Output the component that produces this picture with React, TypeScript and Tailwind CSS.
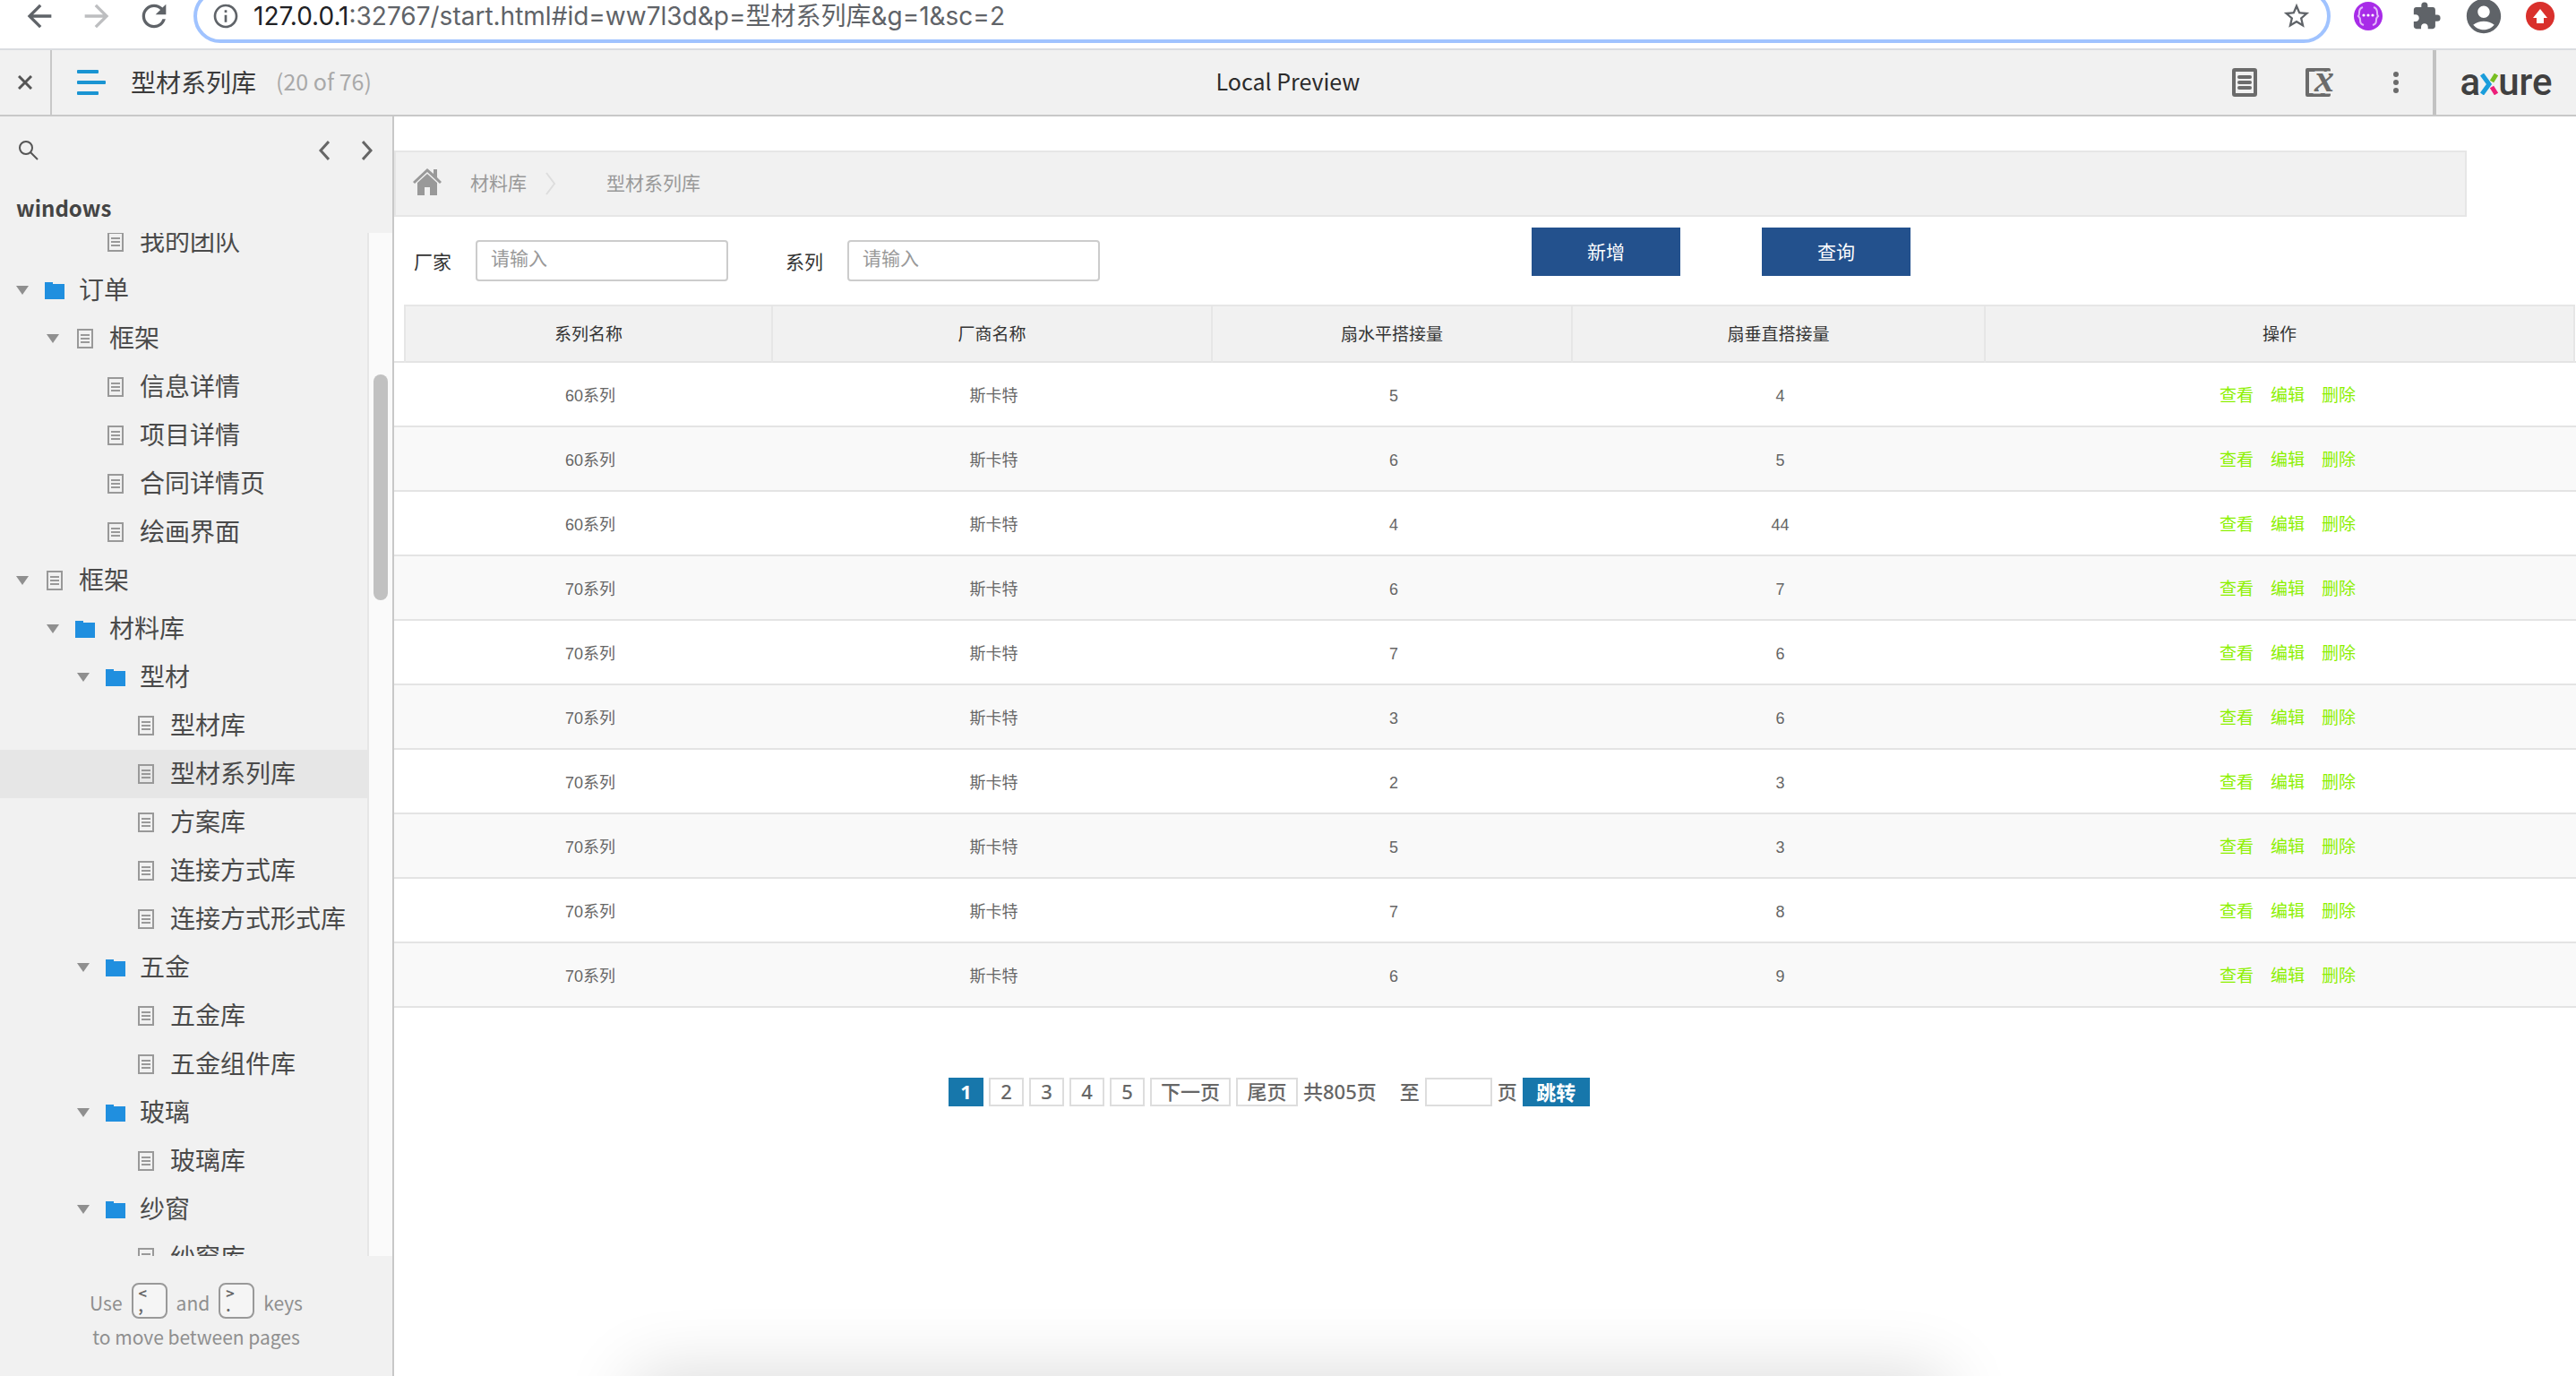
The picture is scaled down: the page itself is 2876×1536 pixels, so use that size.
import { useState } from "react";
import {
  MdAccountCircle,
  MdArrowBack,
  MdArrowForward,
  MdExtension,
  MdInfoOutline,
  MdRefresh,
  MdStarBorder,
} from "react-icons/md";

type Node = { level: number; kind: "folder" | "page"; label: string; open?: boolean };

const tree: Node[] = [
  { level: 2, kind: "page", label: "我的团队" },
  { level: 0, kind: "folder", label: "订单", open: true },
  { level: 1, kind: "page", label: "框架", open: true },
  { level: 2, kind: "page", label: "信息详情" },
  { level: 2, kind: "page", label: "项目详情" },
  { level: 2, kind: "page", label: "合同详情页" },
  { level: 2, kind: "page", label: "绘画界面" },
  { level: 0, kind: "page", label: "框架", open: true },
  { level: 1, kind: "folder", label: "材料库", open: true },
  { level: 2, kind: "folder", label: "型材", open: true },
  { level: 3, kind: "page", label: "型材库" },
  { level: 3, kind: "page", label: "型材系列库" },
  { level: 3, kind: "page", label: "方案库" },
  { level: 3, kind: "page", label: "连接方式库" },
  { level: 3, kind: "page", label: "连接方式形式库" },
  { level: 2, kind: "folder", label: "五金", open: true },
  { level: 3, kind: "page", label: "五金库" },
  { level: 3, kind: "page", label: "五金组件库" },
  { level: 2, kind: "folder", label: "玻璃", open: true },
  { level: 3, kind: "page", label: "玻璃库" },
  { level: 2, kind: "folder", label: "纱窗", open: true },
  { level: 3, kind: "page", label: "纱窗库" },
];

const indents = ["pl-[18px]", "pl-[52px]", "pl-[86px]", "pl-[120px]"];

const rows = [
  ["60系列", "斯卡特", "5", "4"],
  ["60系列", "斯卡特", "6", "5"],
  ["60系列", "斯卡特", "4", "44"],
  ["70系列", "斯卡特", "6", "7"],
  ["70系列", "斯卡特", "7", "6"],
  ["70系列", "斯卡特", "3", "6"],
  ["70系列", "斯卡特", "2", "3"],
  ["70系列", "斯卡特", "5", "3"],
  ["70系列", "斯卡特", "7", "8"],
  ["70系列", "斯卡特", "6", "9"],
];

function PageIcon() {
  return (
    <svg width="18" height="22" viewBox="0 0 18 22" fill="none" stroke="#999" strokeWidth="2" aria-hidden="true">
      <rect x="1" y="1" width="16" height="20" />
      <path d="M4 7h10M4 11h10M4 15h10" />
    </svg>
  );
}

function FolderIcon() {
  return (
    <svg width="22" height="19" viewBox="0 0 22 19" fill="#208fdf" aria-hidden="true">
      <path d="M0 0h9v2h13v17H0z" />
    </svg>
  );
}

function BrowserBar() {
  return (
    <header className="border-b-2 border-[#dadce0] bg-white pb-[18px]">
      <div className="flex h-9 items-center pr-6 pl-6 text-[#5f6368]">
        <button aria-label="Back">
          <MdArrowBack size={40} />
        </button>
        <button aria-label="Forward" className="ml-6 text-[#bdbec0]">
          <MdArrowForward size={40} />
        </button>
        <button aria-label="Reload" className="ml-6">
          <MdRefresh size={40} />
        </button>
        <div className="ml-6 flex h-[60px] flex-1 items-center rounded-full border-4 border-[#a0c3ff] pr-[17px] pl-4 font-[Inter,'Noto_Sans_CJK_SC',sans-serif] text-[28px]">
          <MdInfoOutline size={32} className="mr-[15px]" />
          <label htmlFor="url" className="text-[#202124]">
            127.0.0.1
          </label>
          <input
            id="url"
            className="min-w-0 flex-1 bg-transparent outline-none"
            defaultValue=":32767/start.html#id=ww7l3d&p=型材系列库&g=1&sc=2"
          />
          <button aria-label="Bookmark">
            <MdStarBorder size={34} />
          </button>
        </div>
        <button aria-label="Debugger extension" className="ml-[26px]">
          <svg width="32" height="32" viewBox="0 0 32 32" fill="none" aria-hidden="true">
            <circle cx="16" cy="16" r="16" fill="#a82be8" />
            <path
              d="M10 6c-3 1-4 3-4 6 0 2 0 3-1 4 1 1 2 2 2 4 0 4 1 5 4 6M22 6c3 1 4 3 4 6 0 2 0 3 1 4-1 1-2 2-2 4 0 4-1 5-4 6"
              stroke="#e3b8fa"
              strokeWidth="2"
            />
            <g fill="#fff">
              <circle cx="11" cy="15" r="1.600" />
              <circle cx="16" cy="15" r="1.600" />
              <circle cx="21" cy="15" r="1.600" />
            </g>
          </svg>
        </button>
        <button aria-label="Extensions" className="ml-8">
          <MdExtension size={34} />
        </button>
        <button aria-label="Profile" className="ml-6">
          <MdAccountCircle size={46} />
        </button>
        <button aria-label="Update" className="ml-6">
          <svg width="32" height="32" viewBox="0 0 32 32" aria-hidden="true">
            <circle cx="16" cy="16" r="16" fill="#d9302c" />
            <path d="M16 8l8 10h-4v6h-8v-6H8z" fill="#fff" />
          </svg>
        </button>
      </div>
    </header>
  );
}

function PreviewBar() {
  return (
    <div className="grid h-[74px] grid-cols-[1fr_auto_1fr] border-b-2 border-[#c8c8c8] text-[25px] text-[#2b2b2b]">
      <div className="flex items-center">
        <button aria-label="Close" className="flex h-full w-[58px] items-center justify-center border-r-2 border-[#c8c8c8]">
          <svg width="16" height="16" viewBox="0 0 16 16" stroke="#555" strokeWidth="3" aria-hidden="true">
            <path d="M1 1l14 14M15 1L1 15" />
          </svg>
        </button>
        <button aria-label="Pages" className="ml-7">
          <svg width="32" height="28" viewBox="0 0 32 28" fill="#1a94d2" aria-hidden="true">
            <rect width="24" height="4" rx="1" />
            <rect y="12" width="32" height="4" rx="1" />
            <rect y="24" width="24" height="4" rx="1" />
          </svg>
        </button>
        <h1 className="ml-7 pb-0.5 text-[28px] text-[#3b3b3b]">型材系列库</h1>
        <span className="ml-[22px] pb-0.5 text-[#a9a9a9]">(20 of 76)</span>
      </div>
      <div className="flex items-center pb-0.5">Local Preview</div>
      <div className="flex items-center justify-end">
        <button aria-label="Documentation">
          <svg width="28" height="32" viewBox="0 0 28 32" fill="none" stroke="#6b6b6b" strokeWidth="4" aria-hidden="true">
            <rect x="2" y="2" width="24" height="28" rx="1" />
            <path d="M8 10h12M8 16h12M8 22h12" strokeLinecap="round" />
          </svg>
        </button>
        <button aria-label="Variables" className="ml-[54px]">
          <svg width="32" height="32" viewBox="0 0 32 32" aria-hidden="true">
            <path d="M26 6V2H2v28h24v-4" fill="none" stroke="#6b6b6b" strokeWidth="4" strokeLinejoin="round" />
            <text x="10" y="26" fill="#6b6b6b" stroke="#f1f1f1" strokeWidth="5" paintOrder="stroke" className="font-['Liberation_Serif',serif] text-[44px] font-bold italic">
              x
            </text>
          </svg>
        </button>
        <button aria-label="More" className="ml-[66px]">
          <svg width="6" height="24" viewBox="0 0 6 24" fill="#6b6b6b" aria-hidden="true">
            <circle cx="3" cy="3" r="3" />
            <circle cx="3" cy="12" r="3" />
            <circle cx="3" cy="21" r="3" />
          </svg>
        </button>
        <div className="ml-[38px] h-full w-1 bg-[#c2c2c2]" />
        <a
          href="#axure"
          aria-label="axure"
          className="flex w-[156px] items-baseline justify-center font-[Roboto,sans-serif] text-[42px] leading-none font-medium text-[#404040]"
        >
          a
          <svg width="20" height="24" viewBox="0 0 20 24" fill="none" strokeWidth="5" aria-hidden="true">
            <path d="M18 1l-5 8" stroke="#78be20" />
            <path d="M13 15l5 8" stroke="#ed1e79" />
            <path d="M2 1l8 11-8 11" stroke="#1a9ddb" />
          </svg>
          ure
        </a>
      </div>
    </div>
  );
}

function Sidebar() {
  const [current, setCurrent] = useState("型材系列库");
  return (
    <aside className="flex w-[440px] shrink-0 flex-col border-r-2 border-[#c8c8c8]">
      <div className="flex h-[76px] items-center pr-[22px] pl-[21px]">
        <button aria-label="Search">
          <svg width="22" height="22" viewBox="0 0 22 22" fill="none" stroke="#555" strokeWidth="2" aria-hidden="true">
            <circle cx="8" cy="8" r="7" />
            <path d="M13 13l8 8" />
          </svg>
        </button>
        <button aria-label="Previous page" className="ml-auto">
          <svg width="12" height="22" viewBox="0 0 12 22" fill="none" stroke="#666" strokeWidth="3" aria-hidden="true">
            <path d="M11 1L2 11l9 10" />
          </svg>
        </button>
        <button aria-label="Next page" className="ml-9">
          <svg width="12" height="22" viewBox="0 0 12 22" fill="none" stroke="#666" strokeWidth="3" aria-hidden="true">
            <path d="M1 1l9 10-9 10" />
          </svg>
        </button>
      </div>
      <h2 className="flex h-[54px] items-center pb-0.5 pl-[18px] text-[24px] font-bold text-[#444]">windows</h2>
      <div className="flex min-h-0 flex-1">
        <div className="flex-1 overflow-hidden border-r-2 border-[#e6e6e6]">
          <ul className="-mt-[17px]">
            {tree.map((node, i) => (
              <li key={i}>
                <button
                  onClick={() => setCurrent(node.label)}
                  className={`flex h-[54px] w-full items-center text-[28px] text-[#4a4a4a] ${indents[node.level]} ${
                    node.label === current ? "bg-[#e6e6e6]" : ""
                  }`}
                >
                  <span className="w-8">
                    {node.open && (
                      <svg width="14" height="10" viewBox="0 0 14 10" fill="#8f8f8f" aria-hidden="true">
                        <path d="M0 0h14L7 10z" />
                      </svg>
                    )}
                  </span>
                  <span className="mr-4 flex w-[22px] justify-center">
                    {node.kind === "folder" ? <FolderIcon /> : <PageIcon />}
                  </span>
                  <span className="pb-1">{node.label}</span>
                </button>
              </li>
            ))}
          </ul>
        </div>
        <div className="w-[26px] bg-[#fafafa] pt-[158px]">
          <div className="mx-auto h-[252px] w-4 rounded-full bg-[#c1c1c1]" />
        </div>
      </div>
      <div className="flex h-[134px] flex-col items-center pt-[30px] text-[21px] leading-10 text-[#8f8f8f]">
        <div className="flex h-10 items-center gap-[10px]">
          <span className="pt-1">Use</span>
          <Key top="<" bottom="," />
          <span className="pt-1">and</span>
          <Key top=">" bottom="." />
          <span className="pt-1">keys</span>
        </div>
        <p>to move between pages</p>
      </div>
    </aside>
  );
}

function Key({ top, bottom }: { top: string; bottom: string }) {
  return (
    <kbd className="flex size-10 flex-col justify-center rounded-lg border-2 border-[#999] bg-[#f5f5f5] pb-1 pl-1.5 font-['Noto_Sans_CJK_SC',sans-serif] text-base leading-[14px] font-bold text-[#666]">
      <span>{top}</span>
      <span>{bottom}</span>
    </kbd>
  );
}

function Field({ id, label }: { id: string; label: string }) {
  return (
    <div className="flex items-center">
      <label htmlFor={id} className="mr-[27px] pt-1 text-[#333]">
        {label}
      </label>
      <input
        id={id}
        placeholder="请输入"
        className="h-[46px] w-[282px] rounded border-2 border-[#ccc] bg-white px-[15px] pb-1 outline-none placeholder:text-[#999]"
      />
    </div>
  );
}

function SeriesTable() {
  const th = "border-r-2 border-[#e6e6e6] bg-[#f1f1f1] pt-1 text-center font-normal";
  return (
    <table className="w-full table-fixed border-collapse">
      <colgroup>
        <col className="w-3" />
        <col className="w-[410px]" />
        <col className="w-[491px]" />
        <col className="w-[402px]" />
        <col className="w-[461px]" />
        <col />
        <col className="w-[2px]" />
      </colgroup>
      <thead>
        <tr className="h-[63px] text-[19px] text-[#333]">
          <td />
          <th className={`border-t-2 border-l-2 ${th}`}>系列名称</th>
          <th className={`border-t-2 ${th}`}>厂商名称</th>
          <th className={`border-t-2 ${th}`}>扇水平搭接量</th>
          <th className={`border-t-2 ${th}`}>扇垂直搭接量</th>
          <th className={`border-t-2 ${th}`}>操作</th>
          <td />
        </tr>
      </thead>
      <tbody>
        {rows.map(([series, vendor, h, v], i) => (
          <tr key={i} className="h-[72px] border-y-2 border-[#e4e4e4] bg-white text-center text-[18px] text-[#666] even:bg-[#f9f9f9]">
            <td colSpan={2} className="pt-1 pl-4">
              {series}
            </td>
            <td className="pt-1 pl-1">{vendor}</td>
            <td className="pt-1 pl-1">{h}</td>
            <td className="pt-1 pl-1">{v}</td>
            <td colSpan={2} className="pt-1 pl-4">
              <div className="flex justify-center gap-[19px] text-[19px] text-[#8cf000]">
                <a href="#view">查看</a>
                <a href="#edit">编辑</a>
                <a href="#delete">删除</a>
              </div>
            </td>
          </tr>
        ))}
      </tbody>
    </table>
  );
}

function Pagination() {
  const box = "flex h-8 items-center justify-center border-2";
  return (
    <nav aria-label="分页" className="mt-[77px] flex items-center gap-1.5 pl-[619px] font-['Noto_Sans','Noto_Sans_CJK_SC',sans-serif] text-[22px] font-medium text-[#666]">
      <button className={`${box} w-[39px] border-[#1777ab] bg-[#1777ab] font-bold text-white`}>1</button>
      {["2", "3", "4", "5"].map((n) => (
        <button key={n} className={`${box} w-[39px] border-[#ddd]`}>
          {n}
        </button>
      ))}
      <button className={`${box} w-[90px] border-[#ddd]`}>下一页</button>
      <button className={`${box} w-[69px] border-[#ddd]`}>尾页</button>
      <span>共805页</span>
      <label htmlFor="jump" className="ml-5">
        至
      </label>
      <input id="jump" className="h-8 w-[75px] border-2 border-[#ddd] px-1 outline-none" />
      <span>页</span>
      <button className="h-8 w-[75px] bg-[#1777ab] font-bold text-white">跳转</button>
    </nav>
  );
}

function Content() {
  return (
    <main className="relative min-w-0 flex-1 overflow-hidden bg-white pt-[38px] font-['Liberation_Sans','Noto_Sans_CJK_SC',sans-serif] text-[21px]">
      <nav className="mr-[122px] flex h-[74px] items-center border-2 border-[#e6e6e6] bg-[#f1f1f1] pl-[19px] text-[#999]">
        <a href="#home" aria-label="首页" className="pb-1">
          <svg width="32" height="30" viewBox="0 0 32 30" aria-hidden="true">
            <path d="M16 0L0 15l2 2L16 4l14 13 2-2-5-5V1h-4v5z" fill="#999" />
            <path d="M16 6L5 16v14h8v-9h6v9h8V16z" fill="#999" />
          </svg>
        </a>
        <a href="#materials" className="ml-8">
          材料库
        </a>
        <svg width="12" height="26" viewBox="0 0 12 26" fill="none" stroke="#ddd" strokeWidth="2" className="ml-[21px]" aria-hidden="true">
          <path d="M1 1l9 12-9 12" />
        </svg>
        <a href="#series" className="ml-14">
          型材系列库
        </a>
      </nav>
      <form className="flex h-[98px] items-start pl-[22px]" onSubmit={(e) => e.preventDefault()}>
        <div className="flex gap-16 pt-[26px]">
          <Field id="vendor" label="厂家" />
          <Field id="series" label="系列" />
        </div>
        <div className="ml-[482px] flex gap-[91px] pt-3">
          <button className="h-[54px] w-[166px] bg-[#23518d] pt-0.5 text-white">新增</button>
          <button className="h-[54px] w-[166px] bg-[#23518d] pt-0.5 text-white">查询</button>
        </div>
      </form>
      <SeriesTable />
      <Pagination />
      <div className="absolute top-full right-[29%] left-[11%] h-20 shadow-[0_0_80px_rgba(0,0,0,0.16)]" />
    </main>
  );
}

export default function App() {
  return (
    <div className="flex h-screen flex-col overflow-hidden bg-[#f1f1f1] font-['Noto_Sans_CJK_SC',sans-serif]">
      <BrowserBar />
      <PreviewBar />
      <div className="flex min-h-0 flex-1">
        <Sidebar />
        <Content />
      </div>
    </div>
  );
}
